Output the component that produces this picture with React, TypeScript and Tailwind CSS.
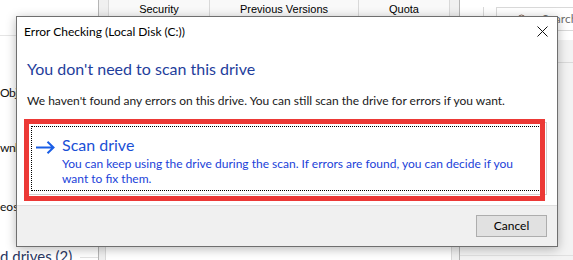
const ui = "font-['Lato','Open_Sans',sans-serif]";

function ArrowIcon() {
  return (
    <svg width="19" height="13" viewBox="0 0 19 13" fill="none">
      <path d="M0 6.5H17.5M11.5 0.8L17.5 6.5L11.5 12.2" stroke="#1a5ee6" strokeWidth="2" />
    </svg>
  );
}

function CloseIcon() {
  return (
    <svg width="11" height="11" viewBox="0 0 11 11" fill="none">
      <path d="M0.5 0.5L10.5 10.5M10.5 0.5L0.5 10.5" stroke="#111" strokeWidth="1" />
    </svg>
  );
}

export default function App() {
  return (
    <div className={`relative w-[573px] h-[260px] overflow-hidden bg-white ${ui}`}>
      {/* explorer nav pane behind */}
      <div className="absolute left-0 top-0 w-[98px] h-[260px] text-[12px] text-[#111]">
        <div className="absolute left-0 top-[35px] w-[98px] h-px bg-[#e5e5e5]" />
        <div className="absolute left-0 top-[84px] w-[16px] overflow-hidden whitespace-nowrap tracking-[-0.5px]">Objects</div>
        <div className="absolute left-0 top-[139px] w-[16px] overflow-hidden whitespace-nowrap tracking-[-0.5px]">wnloads</div>
        <div className="absolute left-0 top-[198px] w-[16px] overflow-hidden whitespace-nowrap">eos</div>
        <div className="absolute left-0 top-[247px] flex items-center gap-2 w-[98px]">
          <span className="text-[15px] leading-[18px] text-[#2a3763] whitespace-nowrap">d drives (2)</span>
          <span className="flex-1 h-px bg-[#e2e2e2] mt-[3px]" />
        </div>
      </div>

      {/* properties window behind */}
      <div className="absolute left-[98px] top-0 w-[362px] h-[260px] bg-[#f0f0f0] border-x border-[#b5b5b5]">
        <div className="absolute left-[9px] top-[-2px] flex h-[20px] font-['Liberation_Sans',sans-serif] text-[11px] leading-[13px] text-black">
          <div className="w-[102px] flex items-end justify-center pb-[1px] bg-[#f9f9f9] border border-[#d9d9d9]">Security</div>
          <div className="w-[149px] flex items-end justify-center pb-[1px] bg-[#f9f9f9] border-y border-r border-[#d9d9d9]">Previous Versions</div>
          <div className="w-[91px] flex items-end justify-center pb-[1px] bg-[#f9f9f9] border-y border-r border-[#d9d9d9]">Quota</div>
        </div>
        <div className="absolute left-[6px] right-[7px] top-[22px] bottom-0 bg-white border-x border-[#d9d9d9]" />
      </div>

      {/* explorer toolbar / search behind */}
      <div className="absolute left-[460px] top-0 w-[113px] h-[260px]">
        <div className="absolute left-[23px] top-[7px] w-px h-[24px] bg-[#d9d9d9]" />
        <div className="absolute left-[36px] top-[7px] w-[90px] h-[24px] border border-[#d9d9d9] flex items-center pl-[18px] gap-[16px] text-[12px] text-[#6d6d6d]">
          <svg width="11" height="11" viewBox="0 0 11 11" fill="none">
            <circle cx="6.5" cy="4.5" r="3.5" stroke="#8a6a5a" />
            <path d="M4 7L1 10" stroke="#8a6a5a" />
          </svg>
          <span>Search</span>
        </div>
        <div className="absolute left-0 top-[40px] right-0 bottom-0 bg-[#f3f3f3]" />
        <div className="absolute left-0 top-[62px] right-0 h-px bg-[#dadada]" />
        <div className="absolute left-0 top-[255px] right-0 h-px bg-[#e0e0e0]" />
      </div>

      {/* Error Checking dialog */}
      <div className="absolute left-[16px] top-[16px] w-[542px] h-[231px] bg-white border border-[#6f6f6f] shadow-[0_2px_10px_rgba(0,0,0,0.28)] flex flex-col">
        <div className="h-[29px] flex items-center justify-between pl-[7px] pr-[9px]">
          <span className="text-[12px] text-black">Error Checking (Local Disk (C:))</span>
          <CloseIcon />
        </div>

        <div className="flex-1 flex flex-col px-[10px]">
          <div className="mt-[12px] text-[16px] leading-[22px] text-[#1f3e9c]">You don't need to scan this drive</div>
          <div className="mt-[13px] text-[12px] leading-[16px] text-[#1a1a1a]">
            We haven't found any errors on this drive. You can still scan the drive for errors if you want.
          </div>

          <div className="relative mt-[13px] w-[520px] h-[73px] border border-[#cfcfcf] p-[3px]">
            <div className="h-full border border-dotted border-black flex items-start pl-[4px] pt-[13px] gap-[7px]">
              <div className="pt-[1px]">
                <ArrowIcon />
              </div>
              <div className="flex flex-col">
                <span className="text-[16px] leading-[18px] text-[#1a4fd6] mt-[-4px]">Scan drive</span>
                <span className="mt-[2px] text-[12px] leading-[15px] text-[#1b3fd9] w-[460px]">
                  You can keep using the drive during the scan. If errors are found, you can decide if you want to fix them.
                </span>
              </div>
            </div>
            {/* red highlight */}
            <div className="absolute left-[-4px] top-[-4px] w-[521px] h-[82px] border-[5px] border-[#ec3936] pointer-events-none" />
          </div>
        </div>

        <div className="h-[41px] bg-[#f0f0f0] border-t border-[#dfdfdf] flex justify-end items-start pt-[9px] pr-[10px]">
          <button className="w-[71px] h-[22px] bg-[#e1e1e1] border border-[#adadad] text-[12px] text-black">Cancel</button>
        </div>
      </div>
    </div>
  );
}
